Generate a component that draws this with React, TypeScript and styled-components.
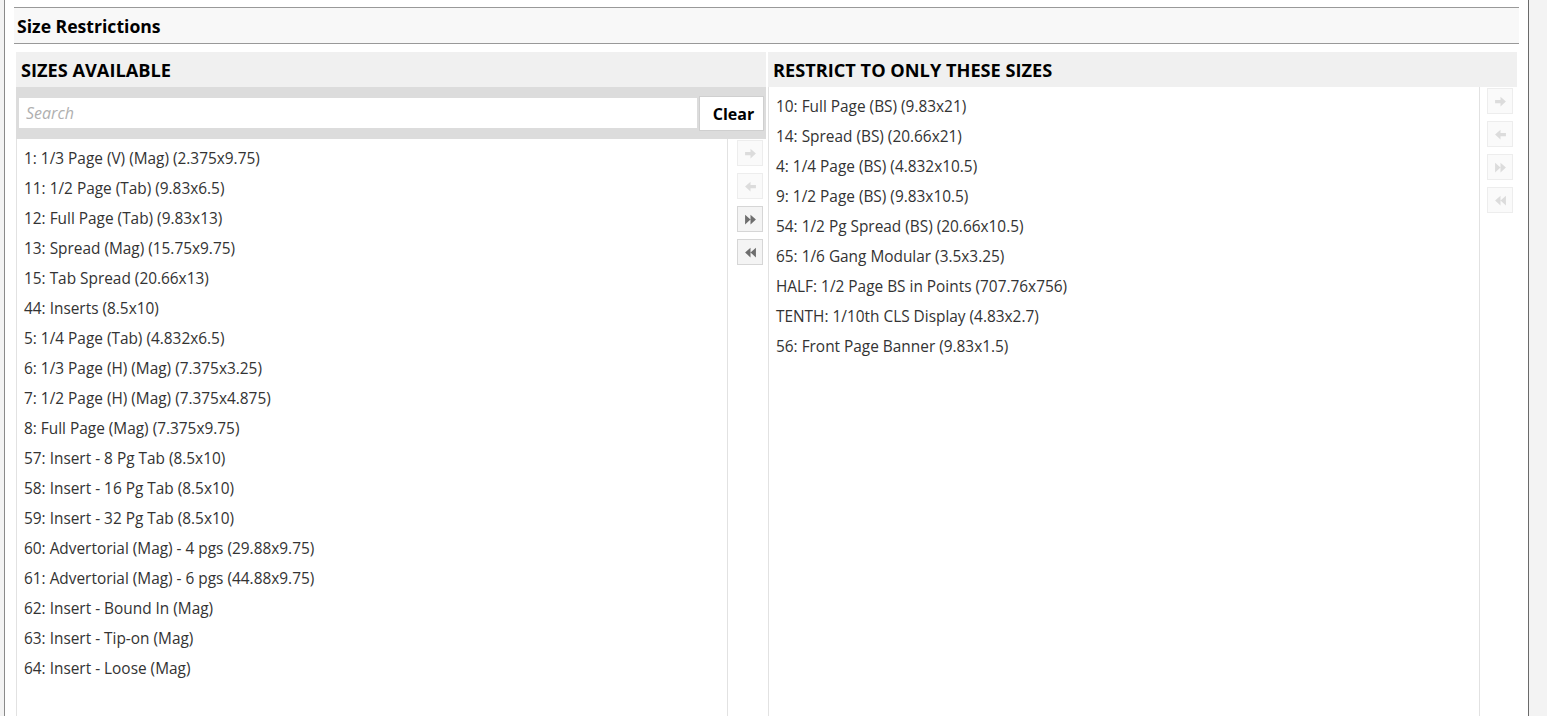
import React from "react";
import styled, { createGlobalStyle } from "styled-components";

const Global = createGlobalStyle`
  html, body { margin: 0; padding: 0; height: 100%; }
  body {
    background: #f3f3f3;
    font-family: "Open Sans", "Noto Sans", "Liberation Sans", sans-serif;
    color: #333;
    overflow: hidden;
  }
`;

const Frame = styled.div`
  box-sizing: border-box;
  margin-left: 4px;
  width: 1525px;
  min-height: 716px;
  background: #fff;
  border-left: 1px solid #8a8a8a;
  border-right: 1px solid #6a6a6a;
  padding: 7px 9px 0 9px;
`;

const SectionHeader = styled.div`
  box-sizing: border-box;
  height: 37px;
  background: #f8f8f8;
  border-top: 1px solid #999;
  border-bottom: 1px solid #999;
  padding: 1px 0 0 3px;
  display: flex;
  align-items: center;
  font-weight: 700;
  font-size: 17.6px;
  color: #000;
`;

const Columns = styled.div`
  display: grid;
  grid-template-columns: 750px 749px;
  column-gap: 2px;
  margin: 8px 0 0 2px;
`;

const Column = styled.div`
  display: flex;
  flex-direction: column;
`;

const ColumnTitle = styled.div`
  box-sizing: border-box;
  height: 35px;
  background: #f0f0f0;
  display: flex;
  align-items: center;
  padding: 1px 0 0 5px;
  font-weight: 700;
  font-size: 18.2px;
  color: #000;
`;

const SearchBar = styled.div`
  box-sizing: border-box;
  height: 52px;
  background: #dcdcdc;
  display: flex;
  align-items: center;
  gap: 2px;
  padding: 0 2px 0 3px;
`;

const SearchInput = styled.input`
  box-sizing: border-box;
  width: 678px;
  height: 30px;
  border: none;
  background: #fff;
  padding: 0 7px;
  font-family: inherit;
  font-size: 16px;
  outline: none;
  &::placeholder {
    color: #b0b0b0;
    font-style: italic;
  }
`;

const ClearButton = styled.button`
  box-sizing: border-box;
  width: 65px;
  height: 35px;
  background: #fff;
  border: 1px solid #cfcfcf;
  font-family: inherit;
  font-weight: 700;
  font-size: 16px;
  color: #000;
  padding: 1px 0 0 4px;
`;

const Body = styled.div`
  display: flex;
`;

const List = styled.div<{ $tall: number }>`
  box-sizing: border-box;
  width: 712px;
  min-height: ${(p) => p.$tall}px;
  border-left: 1px solid #e2e2e2;
  border-right: 1px solid #e2e2e2;
  padding: 4px 0 0 7px;
  display: flex;
  flex-direction: column;
`;

const Item = styled.div`
  height: 30px;
  line-height: 31px;
  font-size: 15.4px;
  color: #333;
  white-space: nowrap;
`;

const Buttons = styled.div<{ $pad: number }>`
  display: flex;
  flex-direction: column;
  gap: 7px;
  padding-left: ${(p) => p.$pad}px;
  padding-top: 1px;
`;

const MoveButton = styled.div<{ $on?: boolean }>`
  box-sizing: border-box;
  width: 26px;
  height: 26px;
  border: 1px solid ${(p) => (p.$on ? "#d6d6d6" : "#ededed")};
  background: ${(p) => (p.$on ? "#f4f4f4" : "#fafafa")};
  color: ${(p) => (p.$on ? "#6e6e6e" : "#dcdcdc")};
  display: flex;
  align-items: center;
  justify-content: center;
`;

const ArrowRight = () => (
  <svg width="13" height="13" viewBox="0 0 12 12">
    <path d="M1 4.5h5V1.5L11 6l-5 4.5V7.5H1z" fill="currentColor" />
  </svg>
);
const ArrowLeft = () => (
  <svg width="13" height="13" viewBox="0 0 12 12">
    <path d="M11 4.5H6V1.5L1 6l5 4.5V7.5h5z" fill="currentColor" />
  </svg>
);
const Forward = () => (
  <svg width="13" height="13" viewBox="0 0 12 12">
    <path d="M1 1.5L6 6l-5 4.5zM6 1.5L11 6l-5 4.5z" fill="currentColor" />
  </svg>
);
const Backward = () => (
  <svg width="13" height="13" viewBox="0 0 12 12">
    <path d="M11 1.5L6 6l5 4.5zM6 1.5L1 6l5 4.5z" fill="currentColor" />
  </svg>
);

const available = [
  "1: 1/3 Page (V) (Mag) (2.375x9.75)",
  "11: 1/2 Page (Tab) (9.83x6.5)",
  "12: Full Page (Tab) (9.83x13)",
  "13: Spread (Mag) (15.75x9.75)",
  "15: Tab Spread (20.66x13)",
  "44: Inserts (8.5x10)",
  "5: 1/4 Page (Tab) (4.832x6.5)",
  "6: 1/3 Page (H) (Mag) (7.375x3.25)",
  "7: 1/2 Page (H) (Mag) (7.375x4.875)",
  "8: Full Page (Mag) (7.375x9.75)",
  "57: Insert - 8 Pg Tab (8.5x10)",
  "58: Insert - 16 Pg Tab (8.5x10)",
  "59: Insert - 32 Pg Tab (8.5x10)",
  "60: Advertorial (Mag) - 4 pgs (29.88x9.75)",
  "61: Advertorial (Mag) - 6 pgs (44.88x9.75)",
  "62: Insert - Bound In (Mag)",
  "63: Insert - Tip-on (Mag)",
  "64: Insert - Loose (Mag)",
];

const restricted = [
  "10: Full Page (BS) (9.83x21)",
  "14: Spread (BS) (20.66x21)",
  "4: 1/4 Page (BS) (4.832x10.5)",
  "9: 1/2 Page (BS) (9.83x10.5)",
  "54: 1/2 Pg Spread (BS) (20.66x10.5)",
  "65: 1/6 Gang Modular (3.5x3.25)",
  "HALF: 1/2 Page BS in Points (707.76x756)",
  "TENTH: 1/10th CLS Display (4.83x2.7)",
  "56: Front Page Banner (9.83x1.5)",
];

export default function App() {
  return (
    <>
      <Global />
      <Frame>
        <SectionHeader>Size Restrictions</SectionHeader>
        <Columns>
          <Column>
            <ColumnTitle>SIZES AVAILABLE</ColumnTitle>
            <SearchBar>
              <SearchInput placeholder="Search" />
              <ClearButton>Clear</ClearButton>
            </SearchBar>
            <Body>
              <List $tall={600}>
                {available.map((s) => (
                  <Item key={s}>{s}</Item>
                ))}
              </List>
              <Buttons $pad={9}>
                <MoveButton><ArrowRight /></MoveButton>
                <MoveButton><ArrowLeft /></MoveButton>
                <MoveButton $on><Forward /></MoveButton>
                <MoveButton $on><Backward /></MoveButton>
              </Buttons>
            </Body>
          </Column>
          <Column>
            <ColumnTitle>RESTRICT TO ONLY THESE SIZES</ColumnTitle>
            <Body>
              <List $tall={650}>
                {restricted.map((s) => (
                  <Item key={s}>{s}</Item>
                ))}
              </List>
              <Buttons $pad={7}>
                <MoveButton><ArrowRight /></MoveButton>
                <MoveButton><ArrowLeft /></MoveButton>
                <MoveButton><Forward /></MoveButton>
                <MoveButton><Backward /></MoveButton>
              </Buttons>
            </Body>
          </Column>
        </Columns>
      </Frame>
    </>
  );
}
